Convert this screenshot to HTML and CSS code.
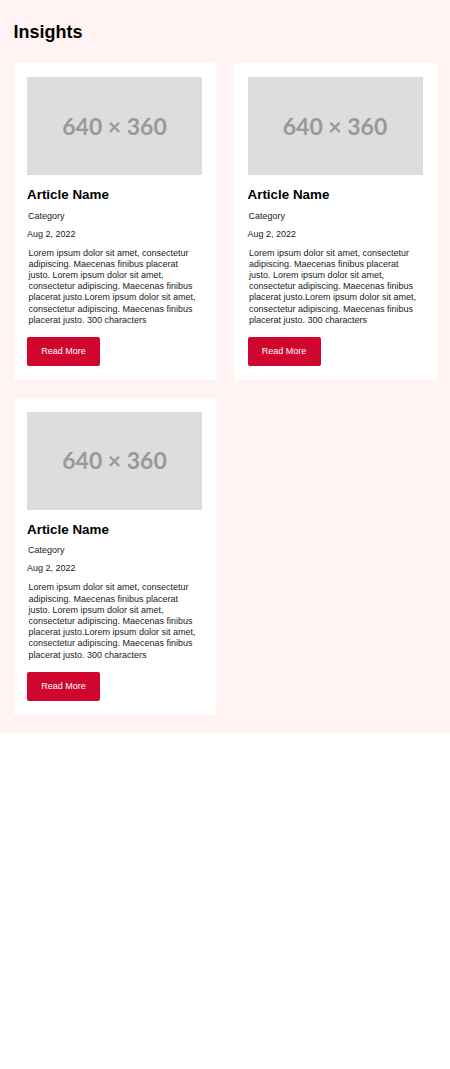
FILE: index.html
```html
<!DOCTYPE html>
<html lang="en">
<head>
<meta charset="utf-8">
<title>Insights</title>
<link rel="stylesheet" href="styles.css">
</head>
<body>
<section class="insights">
  <h2 class="insights-title">Insights</h2>
  <div class="card-grid">
    <article class="card">
      <div class="card-image"><span>640 × 360</span></div>
      <h3 class="card-title">Article Name</h3>
      <p class="card-category">Category</p>
      <p class="card-date">Aug 2, 2022</p>
      <p class="card-text">Lorem ipsum dolor sit amet, consectetur adipiscing. Maecenas finibus placerat justo. Lorem ipsum dolor sit amet, consectetur adipiscing. Maecenas finibus placerat justo.Lorem ipsum dolor sit amet, consectetur adipiscing. Maecenas finibus placerat justo. 300 characters</p>
      <a class="card-button" href="#">Read More</a>
    </article>
    <article class="card">
      <div class="card-image"><span>640 × 360</span></div>
      <h3 class="card-title">Article Name</h3>
      <p class="card-category">Category</p>
      <p class="card-date">Aug 2, 2022</p>
      <p class="card-text">Lorem ipsum dolor sit amet, consectetur adipiscing. Maecenas finibus placerat justo. Lorem ipsum dolor sit amet, consectetur adipiscing. Maecenas finibus placerat justo.Lorem ipsum dolor sit amet, consectetur adipiscing. Maecenas finibus placerat justo. 300 characters</p>
      <a class="card-button" href="#">Read More</a>
    </article>
    <article class="card">
      <div class="card-image"><span>640 × 360</span></div>
      <h3 class="card-title">Article Name</h3>
      <p class="card-category">Category</p>
      <p class="card-date">Aug 2, 2022</p>
      <p class="card-text">Lorem ipsum dolor sit amet, consectetur adipiscing. Maecenas finibus placerat justo. Lorem ipsum dolor sit amet, consectetur adipiscing. Maecenas finibus placerat justo.Lorem ipsum dolor sit amet, consectetur adipiscing. Maecenas finibus placerat justo. 300 characters</p>
      <a class="card-button" href="#">Read More</a>
    </article>
  </div>
</section>
</body>
</html>
```

FILE: styles.css
```css
* {
  box-sizing: border-box;
}

body {
  margin: 0;
  background: #ffffff;
  font-family: "Liberation Sans", Arial, sans-serif;
  color: #000;
}

.insights {
  background: #fff3f4;
  padding: 21.6px 13.5px 18px;
}

.insights-title {
  margin: 0 0 20.7px;
  font-size: 18px;
  font-weight: 700;
  line-height: normal;
}

.card-grid {
  display: grid;
  grid-template-columns: repeat(2, 1fr);
  gap: 18px;
  align-items: start;
}

.card {
  background: #ffffff;
  border-radius: 2px;
  padding: 14px 14px 14px 13.5px;
  display: flex;
  flex-direction: column;
  align-items: flex-start;
}

.card-image {
  width: 100%;
  height: 98px;
  background: #dddddd;
  display: flex;
  align-items: center;
  justify-content: center;
  padding-bottom: 1px;
  font-family: Lato, "Liberation Sans", sans-serif;
  font-size: 23px;
  font-weight: 700;
  color: #999999;
}

.card-title {
  margin: 12px 0 0;
  font-size: 13.4px;
  font-weight: 700;
  line-height: normal;
}

.card-category,
.card-date {
  margin: 8.4px 0 0;
  font-size: 9px;
  line-height: normal;
  color: #1a1a1a;
}

.card-category {
  padding-left: 1px;
}

.card-date {
  margin-top: 8px;
}

.card-text {
  align-self: stretch;
  margin: 9px 0 0;
  padding: 0 6px 0 1.5px;
  font-size: 9px;
  line-height: 11.2px;
  color: #1a1a1a;
}

.card-button {
  margin-top: 10.9px;
  display: inline-block;
  width: 73px;
  height: 29px;
  line-height: 29px;
  text-align: center;
  background: #d0062f;
  color: #ffffff;
  font-size: 9px;
  text-decoration: none;
  border-radius: 2px;
}
```
